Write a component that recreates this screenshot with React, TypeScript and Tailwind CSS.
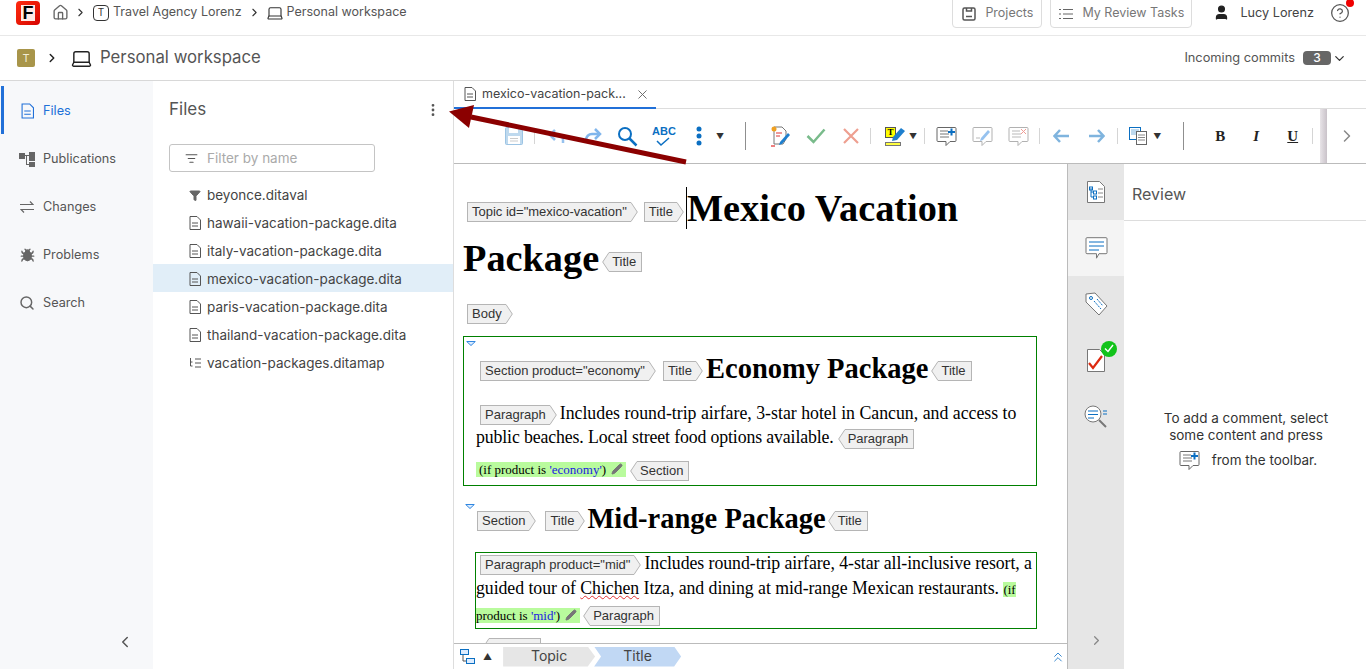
import React from 'react';
import { Home, ChevronRight, Laptop, MoreVertical, X, User, CircleHelp, ChevronDown, ChevronLeft, ChevronsUp, Search, Bug, ListFilter, Filter, Pencil } from 'lucide-react';

const FileIcon: React.FC<{ className?: string; large?: boolean }> = ({ className = '', large }) => (
  <svg className={className} width={large ? 13 : 12} height={large ? 16 : 14} viewBox="0 0 12 14" fill="none" stroke="currentColor" strokeWidth="1">
    <path d="M1 .5h7l3.500 3.500v9.500h-10.500z" />
    <path d="M3 7h6M3 10h6" />
  </svg>
);

const Tag: React.FC<{ label: string; closing?: boolean; className?: string }> = ({ label, closing, className = '' }) => (
  <span className={`inline-flex h-[20px] align-middle font-['Liberation_Sans',sans-serif] text-[13px] font-normal leading-[18px] tracking-normal text-[#333] ${className}`}>
    {closing && (
      <svg width="8" height="20" viewBox="0 0 8 20" className="shrink-0">
        <path d="M8 .5H7L.7 10 7 19.500h1" fill="#f0f0f0" stroke="#b5b5b5" />
      </svg>
    )}
    <span className={`whitespace-nowrap border-y border-[#b5b5b5] bg-[#f0f0f0] ${closing ? 'border-r pr-[5px] pl-[2px]' : 'border-l pl-[4px] pr-[3px]'}`}>{label}</span>
    {!closing && (
      <svg width="8" height="20" viewBox="0 0 8 20" className="shrink-0">
        <path d="M0 .5h1L7.300 10 1 19.500H0" fill="#f0f0f0" stroke="#b5b5b5" />
      </svg>
    )}
  </span>
);

const Fold = () => (
  <svg width="10" height="5" viewBox="0 0 10 5" className="block">
    <path d="M.7.5h8.600L5 4.500z" fill="#dcecff" stroke="#2f86e0" />
  </svg>
);

const Condition: React.FC<{ value: string; className?: string }> = ({ value, className = '' }) => (
  <span className={`bg-[#b9fb9d] text-[13px] tracking-normal ${className}`}>
    (if product is <span className="text-[#2020e0]">'{value}'</span>)
    <Pencil className="ml-[5px] mr-[3px] inline-block align-[-1px]" size={12} color="#777" fill="#777" />
  </span>
);

const Sep = ({ className = '' }: { className?: string }) => <span className={`h-[16px] w-px bg-[#d5d5d5] ${className}`} />;
const BigSep = ({ className = '' }: { className?: string }) => <span className={`h-[28px] w-px bg-[#8f8f8f] ${className}`} />;
const Caret = ({ className = '' }: { className?: string }) => <span className={`text-[8px] leading-none text-[#333] ${className}`}>▼</span>;

const CommentShape: React.FC<{ add?: boolean; edit?: boolean; del?: boolean; faded?: boolean }> = ({ add, edit, del, faded }) => (
  <svg width="21" height="21" viewBox="0 0 21 21" fill="none" className={faded ? 'opacity-50' : ''}>
    <path d="M2 1.500h17a1 1 0 0 1 1 1v12a1 1 0 0 1-1 1h-5l-4 4v-4H2a1 1 0 0 1-1-1v-12a1 1 0 0 1 1-1z" stroke="#666" fill="#fff" />
    <path d={edit ? 'M4 12h4' : 'M4 5h8M4 8h9M4 11h9'} stroke="#777" />
    {add && <path d="M15.500 2.500v7M12 6h7" stroke="#0b6fc2" strokeWidth="2" />}
    {del && <path d="M13 3l5 5M18 3l-5 5" stroke="#e23b2e" />}
    {edit && <path d="M9 12l7-8 2 2-7 8-3 1z" fill="#2f86e0" />}
  </svg>
);

const ToolbarIcons = () => (
  <div className="flex h-[55px] shrink-0 items-center border-b border-[#bbb] pl-[51px]">
    <svg width="18" height="18" viewBox="0 0 18 18" className="opacity-50">
      <path d="M.5 1.500a1 1 0 0 1 1-1h13l3 3v13a1 1 0 0 1-1 1h-15a1 1 0 0 1-1-1z" fill="#7fb4de" stroke="#3c8bcb" />
      <rect x="4" y=".5" width="9" height="5.500" fill="#fff" />
      <rect x="3" y="9" width="12" height="8" fill="#fff" />
      <path d="M5 11.500h8M5 14h8" stroke="#999" />
    </svg>
    <Sep className="ml-[11px]" />
    <svg width="20" height="18" viewBox="0 0 20 18" fill="none" className="ml-[12px] opacity-50">
      <path d="M8 3L3 8l5 5" stroke="#2f86e0" strokeWidth="2.500" />
      <path d="M3 8h8a5 5 0 0 1 5 5v3" stroke="#2f86e0" strokeWidth="2.500" />
    </svg>
    <svg width="20" height="18" viewBox="0 0 20 18" fill="none" className="ml-[16px] opacity-60">
      <path d="M12 2l5 5-5 5" stroke="#2f86e0" strokeWidth="2.500" />
      <path d="M17 7H9a6 6 0 0 0-6 6v3" stroke="#2f86e0" strokeWidth="2.500" />
    </svg>
    <svg width="21" height="21" viewBox="0 0 21 21" fill="none" className="ml-[14px]">
      <circle cx="8" cy="8" r="6" stroke="#0b6fc2" strokeWidth="2" />
      <path d="M12.500 12.500l7 7" stroke="#0b6fc2" strokeWidth="2.500" />
    </svg>
    <span className="relative ml-[14px] block h-[22px] w-[23px]">
      <span className="block text-center font-['Liberation_Sans',sans-serif] text-[11px] font-bold leading-[12px] text-[#0b6fc2]">ABC</span>
      <svg width="14" height="10" viewBox="0 0 14 10" fill="none" className="absolute left-[4px] top-[12px]">
        <path d="M1 4l4 4 8-7" stroke="#0b6fc2" strokeWidth="1.500" />
      </svg>
    </span>
    <svg width="6" height="20" viewBox="0 0 6 20" className="ml-[21px]" fill="#0b6fc2">
      <circle cx="3" cy="3" r="2.500" />
      <circle cx="3" cy="10" r="2.500" />
      <circle cx="3" cy="17" r="2.500" />
    </svg>
    <Caret className="ml-[14px]" />
    <BigSep className="ml-[21px]" />
    <svg width="21" height="22" viewBox="0 0 21 22" fill="none" className="ml-[24px]">
      <path d="M4 2h8l4 4v8l-3 5H4z" fill="#fff" stroke="#777" />
      <path d="M6 8h6M6 11h4" stroke="#d33" />
      <path d="M10 17l8-9 2 2-8 9-3 1z" fill="#1e7fce" />
      <circle cx="4" cy="4" r="2.500" fill="#f0a020" />
      <path d="M1 21h4" stroke="#d00" />
    </svg>
    <svg width="20" height="16" viewBox="0 0 20 16" fill="none" className="ml-[15px]">
      <path d="M1.500 8l6 6L18.500 1.500" stroke="#79bb8b" strokeWidth="2.500" />
    </svg>
    <svg width="16" height="16" viewBox="0 0 16 16" fill="none" className="ml-[17px]">
      <path d="M1 1l14 14M15 1L1 15" stroke="#ee9f90" strokeWidth="2.200" />
    </svg>
    <Sep className="ml-[11px]" />
    <span className="relative ml-[14px] block h-[19px] w-[21px]">
      <span className="absolute left-0 top-0 block h-[11px] w-[11px] border border-[#555] bg-[#ffff00] text-center font-['Liberation_Serif',serif] text-[9px] font-bold leading-[9px] text-black">T</span>
      <span className="absolute bottom-0 left-0 h-[4px] w-[16px] border border-[#777] bg-[#ffff40]" />
      <svg width="15" height="15" viewBox="0 0 15 15" className="absolute left-[6px] top-0">
        <path d="M2 10l8-9 4 3-8 9-5 1z" fill="#1e7fce" />
      </svg>
    </span>
    <Caret className="ml-[3px]" />
    <Sep className="ml-[7px]" />
    <span className="ml-[11px] block"><CommentShape add /></span>
    <span className="ml-[15px] block"><CommentShape edit faded /></span>
    <span className="ml-[15px] block"><CommentShape del faded /></span>
    <Sep className="ml-[10px]" />
    <svg width="16" height="14" viewBox="0 0 16 14" fill="none" className="ml-[13px]">
      <path d="M7 1L1.500 7 7 13M2 7h14" stroke="#7fb4de" strokeWidth="2.500" />
    </svg>
    <svg width="16" height="14" viewBox="0 0 16 14" fill="none" className="ml-[20px]">
      <path d="M9 1l5.500 6L9 13M14 7H0" stroke="#7fb4de" strokeWidth="2.500" />
    </svg>
    <Sep className="ml-[12px]" />
    <svg width="18" height="18" viewBox="0 0 18 18" fill="none" className="ml-[11px]">
      <rect x=".5" y=".5" width="11" height="12" fill="#fff" stroke="#0b6fc2" />
      <path d="M2 3h8M2 5h8M2 7h8" stroke="#7fb4de" />
      <rect x="7.500" y="4.500" width="10" height="13" fill="#fff" stroke="#666" />
      <path d="M9 8h7M9 10.500h7M9 13h7" stroke="#888" />
    </svg>
    <Caret className="ml-[6px]" />
    <BigSep className="ml-[22px]" />
    <b className="ml-[31px] w-[10px] text-center font-['Liberation_Serif',serif] text-[15px] text-[#222]">B</b>
    <i className="ml-[26px] w-[10px] text-center font-['Liberation_Serif',serif] text-[15px] font-bold text-[#222]">I</i>
    <span className="ml-[26px] w-[10px] text-center font-['Liberation_Serif',serif] text-[15px] font-bold text-[#222] underline">U</span>
    <Sep className="ml-[15px]" />
    <span className="ml-[7px] h-full w-[7px] bg-gradient-to-r from-[#e8e4e8] to-[#c9c2c9]" />
    <ChevronRight className="ml-[10px]" size={20} color="#888" strokeWidth={1.800} />
  </div>
);

const navItems = [
  { label: 'Files', active: true, icon: <FileIcon large className="text-[#2170d8]" /> },
  {
    label: 'Publications',
    icon: (
      <svg width="16" height="15" viewBox="0 0 16 15" fill="#666" className="shrink-0">
        <rect x="0" y="1" width="6" height="6" />
        <rect x="10" y="0" width="6" height="5" />
        <rect x="10" y="5" width="6" height="4" />
        <rect x="10" y="10" width="6" height="5" />
        <path d="M6 3h4v1H8v8h2v1H7V4H6z" />
      </svg>
    ),
  },
  {
    label: 'Changes',
    icon: (
      <svg width="14" height="12" viewBox="0 0 14 12" fill="none" stroke="#666" strokeWidth="1.200" className="shrink-0">
        <path d="M0 3.500h13L10 .5M14 8.500H1l3 3" />
      </svg>
    ),
  },
  { label: 'Problems', icon: <Bug className="shrink-0" size={15} color="#666" fill="#666" /> },
  { label: 'Search', icon: <Search className="shrink-0" size={16} color="#666" strokeWidth={2.200} /> },
];

const files = [
  { name: 'beyonce.ditaval', kind: 'filter' },
  { name: 'hawaii-vacation-package.dita', kind: 'file' },
  { name: 'italy-vacation-package.dita', kind: 'file' },
  { name: 'mexico-vacation-package.dita', kind: 'file', selected: true },
  { name: 'paris-vacation-package.dita', kind: 'file' },
  { name: 'thailand-vacation-package.dita', kind: 'file' },
  { name: 'vacation-packages.ditamap', kind: 'map' },
];

const App: React.FC = () => {
  return (
    <div className="relative flex h-[669px] w-[1366px] flex-col overflow-hidden bg-white font-['Inter',sans-serif] text-[13px] text-[#555]">
      <header className="flex h-[36px] shrink-0 items-center border-b border-[#e8e8e8] pb-[10px] text-[12.500px]">
        <div className="ml-[16px] flex h-[24px] w-[24px] items-center justify-center rounded-[4px] bg-gradient-to-br from-[#ff2a10] to-[#d60000]">
          <span className="flex h-[16px] w-[14px] items-center justify-center bg-[#ffe9e4] font-['Liberation_Sans',sans-serif] text-[18px] font-bold leading-none text-black">F</span>
        </div>
        <Home className="ml-[12px]" size={17} color="#666" strokeWidth={1.900} />
        <ChevronRight className="ml-[5px]" size={13} color="#333" strokeWidth={2} />
        <span className="ml-[6px] flex h-[16px] w-[16px] items-center justify-center rounded-[4px] border border-[#333] text-[10px] text-[#333]">T</span>
        <span className="ml-[4px]">Travel Agency Lorenz</span>
        <ChevronRight className="ml-[6px]" size={13} color="#333" strokeWidth={2} />
        <Laptop className="ml-[5px]" size={18} color="#333" strokeWidth={1.500} />
        <span className="ml-[3px]">Personal workspace</span>

        <div className="ml-auto flex items-center">
          <button className="flex h-[31px] w-[90px] items-center rounded-b-[4px] border border-[#ddd] pl-[9px] pt-[2px] text-[#777]">
            <svg width="14" height="14" viewBox="0 0 14 14" fill="none" stroke="#555" strokeWidth="1.500">
              <rect x="1" y="1" width="12" height="12" rx="1.500" />
              <path d="M4.500 1v3h5V1M4 9.500h6" />
            </svg>
            <span className="ml-[9px]">Projects</span>
          </button>
          <button className="ml-[8px] flex h-[31px] w-[142px] items-center rounded-b-[4px] border border-[#ddd] pl-[8px] pt-[2px] text-[#777]">
            <svg width="14" height="12" viewBox="0 0 14 12" stroke="#666" strokeWidth="1.200">
              <path d="M0 1.500h2M4 1.500h10M0 6h2M4 6h10M0 10.500h2M4 10.500h10" />
            </svg>
            <span className="ml-[9px]">My Review Tasks</span>
          </button>
          <User className="ml-[21px]" size={17} color="#222" fill="#222" />
          <span className="ml-[10px] text-[12.700px] text-[#444]">Lucy Lorenz</span>
          <span className="relative ml-[16px] mr-[16px] block">
            <CircleHelp size={20} color="#555" strokeWidth={1.500} />
            <span className="absolute right-[-4px] top-[-4px] h-[8px] w-[8px] rounded-full bg-[#f00000]" />
          </span>
        </div>
      </header>

      <div className="flex h-[45px] shrink-0 items-center border-b border-[#d8d8d8]">
        <span className="ml-[17px] flex h-[18px] w-[18px] items-center justify-center rounded-[2px] bg-[#a8954a] text-[11px] text-[#f2ecd4]">T</span>
        <ChevronRight className="ml-[10px]" size={14} color="#222" strokeWidth={2.500} />
        <Laptop className="ml-[11px]" size={23} color="#222" strokeWidth={1.500} />
        <span className="ml-[7px] text-[16.750px] text-[#555]">Personal workspace</span>
        <div className="ml-auto flex items-center pr-[19px]">
          <span className="text-[12.800px] text-[#555]">Incoming commits</span>
          <span className="ml-[8px] flex h-[14px] w-[28px] items-center justify-center rounded-[4px] bg-[#666] text-[12px] font-medium text-white">3</span>
          <ChevronDown className="ml-[1px]" size={15} color="#333" strokeWidth={2} />
        </div>
      </div>

      <div className="flex min-h-0 flex-1">
        <nav className="flex w-[153px] shrink-0 flex-col bg-[#f7f8fa] pt-[5px] text-[12.700px]">
          {navItems.map((item) => (
            <div key={item.label} className={`ml-[1px] flex h-[48px] items-center border-l-[3px] pt-[2px] ${item.active ? 'border-[#2170d8] text-[#2170d8]' : 'border-transparent text-[#555]'}`}>
              <span className="ml-[16px] mr-[9px] flex w-[14px] justify-center">{item.icon}</span>
              <span>{item.label}</span>
            </div>
          ))}
          <div className="mt-auto flex justify-end pb-[18px] pr-[19px]">
            <ChevronLeft size={18} color="#555" strokeWidth={2} />
          </div>
        </nav>

        <aside className="flex w-[301px] shrink-0 flex-col border-r border-[#ddd] text-[13.500px]">
          <div className="flex h-[58px] items-center justify-between pl-[16px] pr-[12px]">
            <span className="text-[17px] text-[#555]">Files</span>
            <MoreVertical size={16} color="#555" strokeWidth={2.200} />
          </div>
          <div className="ml-[16px] mt-[5px] flex h-[28px] w-[206px] items-center rounded-[3px] border border-[#c4c4c4] pl-[15px]">
            <ListFilter size={13} color="#555" />
            <span className="ml-[9px] text-[#aaa]">Filter by name</span>
          </div>
          <ul className="mt-[8px]">
            {files.map((f) => (
              <li key={f.name} className={`flex h-[28px] items-center pl-[36px] pt-[2px] ${f.selected ? 'bg-[#e1eef8]' : ''}`}>
                <span className="flex w-[12px] justify-center">
                  {f.kind === 'filter' && <Filter size={13} color="#666" fill="#666" />}
                  {f.kind === 'file' && <FileIcon className="text-[#555]" />}
                  {f.kind === 'map' && (
                    <svg width="12" height="12" viewBox="0 0 12 12" fill="none" stroke="#555">
                      <path d="M1.500 1v8h2M1.500 5h2M6 2h6M6 6h6M6 10h6" />
                    </svg>
                  )}
                </span>
                <span className="ml-[6px] text-[#444]">{f.name}</span>
              </li>
            ))}
          </ul>
        </aside>

        <main className="flex min-w-0 flex-1 flex-col">
          <div className="flex h-[28px] shrink-0 border-b border-[#ddd]">
            <div className="flex h-[28px] w-[202px] items-center border-b-2 border-[#2170d8] pl-[10px]">
              <FileIcon className="shrink-0 text-[#555]" />
              <span className="ml-[6px] whitespace-nowrap text-[12.500px] text-[#444]">mexico-vacation-pack...</span>
              <X className="ml-[9px] shrink-0" size={15} color="#666" strokeWidth={1.500} />
            </div>
          </div>
          <ToolbarIcons />

          <div className="flex min-h-0 flex-1">
            <div className="flex min-w-0 flex-1 flex-col border-r border-[#bbb]">
              <div className="min-h-0 flex-1 overflow-hidden pl-[9px] pr-[30px] font-['Liberation_Serif',serif] text-black">
                <h1 className="mt-[19px] text-[38.300px] font-bold leading-[50px]">
                  <Tag label={'Topic id="mexico-vacation"'} className="ml-[4px] mr-[6px]" />
                  <Tag label="Title" className="mr-[2px]" />
                  <span className="border-l border-black">Mexico Vacation Package</span>
                  <Tag label="Title" closing className="ml-[3px]" />
                </h1>
                <div className="mt-[20px]"><Tag label="Body" className="ml-[4px]" /></div>

                <section className="mt-[12px] h-[150px] w-[574px] border border-[#008000] px-[12px]">
                  <div className="ml-[-10px] mt-[4px]"><Fold /></div>
                  <h2 className="mt-[3px] whitespace-nowrap text-[28.500px] font-bold leading-[40px]">
                    <Tag label={'Section product="economy"'} className="ml-[4px] mr-[7px]" />
                    <Tag label="Title" className="mr-[3px]" />
                    Economy Package
                    <Tag label="Title" closing className="ml-[3px]" />
                  </h2>
                  <p className="mt-[12px] text-[17.800px] leading-[24px]">
                    <Tag label="Paragraph" className="ml-[4px] mr-[3px]" />
                    Includes round-trip airfare, 3-star hotel in Cancun, and access to{' '}
                    <span className="tracking-[-0.13px]">public beaches. Local street food options available.</span>
                    <Tag label="Paragraph" closing className="ml-[4px]" />
                  </p>
                  <div className="mt-[11px]">
                    <Condition value="economy" className="pl-[3px]" />
                    <Tag label="Section" closing className="ml-[4px]" />
                  </div>
                </section>

                <div className="ml-[2px] mt-[18px]"><Fold /></div>
                <h2 className="mt-[-10px] whitespace-nowrap text-[28.500px] font-bold leading-[40px]">
                  <Tag label="Section" className="ml-[14px] mr-[9px]" />
                  <Tag label="Title" className="mr-[2px]" />
                  Mid-range Package
                  <Tag label="Title" closing className="ml-[2px]" />
                </h2>
                <div className="ml-[12px] mt-[13px] h-[77px] w-[562px] overflow-hidden border border-[#008000] text-[17.800px] leading-[25px]">
                  <div className="mt-[-2px] tracking-[-0.06px]">
                    <Tag label={'Paragraph product="mid"'} className="ml-[4px] mr-[3px]" />
                    Includes round-trip airfare, 4-star all-inclusive resort, a guided tour of{' '}
                    <span className="underline decoration-wavy decoration-[#e03030] decoration-1">Chichen</span> Itza, and dining at mid-range Mexican restaurants.{' '}
                    <Condition value="mid" />
                    <Tag label="Paragraph" closing className="ml-[3px]" />
                  </div>
                </div>
                <div className="mt-[8px] h-[20px] leading-[20px]"><Tag label="Section" closing className="ml-[19px]" /></div>
              </div>

              <div className="flex h-[26px] shrink-0 items-center border-t border-[#bbb]">
                <svg width="15" height="15" viewBox="0 0 15 15" fill="none" stroke="#0b6fc2" className="ml-[6px]">
                  <rect x=".5" y=".5" width="8" height="5" fill="#dcecff" />
                  <rect x="6.500" y="9.500" width="8" height="5" fill="#dcecff" />
                  <path d="M3 6v6h3" stroke="#555" />
                </svg>
                <span className="ml-[8px] text-[9px] text-[#333]">▲</span>
                <div className="ml-[11px] flex h-[20px] w-[92px] items-center justify-center bg-[#e6e6e6] pb-[2px] text-[14px] text-[#444] [clip-path:polygon(0_0,92%_0,100%_50%,92%_100%,0_100%)]">Topic</div>
                <div className="ml-[-1px] flex h-[20px] w-[87px] items-center justify-center bg-[#c1d8f4] pb-[2px] text-[14px] text-[#444] [clip-path:polygon(0_0,92%_0,100%_50%,92%_100%,0_100%,8%_50%)]">Title</div>
                <ChevronsUp className="ml-auto mr-[1px]" size={16} color="#3b8ad0" strokeWidth={1.500} />
              </div>
            </div>

            <div className="flex w-[56px] shrink-0 flex-col bg-[#e6e6e6]">
              <div className="flex h-[56px] items-center justify-center">
                <svg width="18" height="22" viewBox="0 0 18 22" fill="none">
                  <path d="M.5.500h12l5 5v16H.5z" fill="#fff" stroke="#777" />
                  <path d="M4 7v9h2M4 11h2" stroke="#0b6fc2" />
                  <rect x="2.500" y="6" width="3" height="3" stroke="#0b6fc2" />
                  <rect x="6.500" y="10" width="3" height="3" stroke="#0b6fc2" />
                  <rect x="6.500" y="15" width="3" height="3" stroke="#0b6fc2" />
                  <path d="M11 8h5M11 12h5M11 16h5" stroke="#888" />
                </svg>
              </div>
              <div className="flex h-[56px] items-center justify-center bg-[#f4f4f4]">
                <svg width="23" height="23" viewBox="0 0 23 23" fill="none">
                  <path d="M2 .700h19a1 1 0 0 1 1 1v14a1 1 0 0 1-1 1h-7l-2.500 4.500v-4.500H2a1 1 0 0 1-1-1v-14a1 1 0 0 1 1-1z" stroke="#777" fill="#fff" />
                  <path d="M4 5h15M4 9h15M4 13h10" stroke="#0b6fc2" />
                </svg>
              </div>
              <div className="flex h-[56px] items-center justify-center">
                <svg width="23" height="24" viewBox="0 0 23 24" fill="none">
                  <path d="M1 2l9-1 12 13-8 9L1 10z" fill="#fff" stroke="#777" />
                  <circle cx="6" cy="6" r="1.500" stroke="#0b6fc2" />
                  <path d="M9 9l7 8M12 7l6 7" stroke="#0b6fc2" strokeDasharray="2 1" />
                </svg>
              </div>
              <div className="flex h-[56px] items-center justify-center">
                <span className="relative block h-[23px] w-[18px]">
                  <svg width="18" height="23" viewBox="0 0 18 23" fill="none">
                    <path d="M.5.500h12l5 5v17H.5z" fill="#fff" stroke="#777" />
                    <path d="M2 14l4 5 9-12" stroke="#dd2a10" strokeWidth="2.200" />
                  </svg>
                  <span className="absolute left-[14px] top-[-8px] flex h-[16px] w-[16px] items-center justify-center rounded-full bg-[#12c31a]">
                    <svg width="10" height="9" viewBox="0 0 10 9" fill="none">
                      <path d="M1 4.500l3 3 5-6.500" stroke="#fff" strokeWidth="1.400" />
                    </svg>
                  </span>
                </span>
              </div>
              <div className="flex h-[56px] items-center justify-center">
                <svg width="24" height="23" viewBox="0 0 24 23" fill="none">
                  <circle cx="9" cy="9" r="8" fill="#fff" stroke="#777" />
                  <path d="M4 6h10M4 9.500h10M4 13h6" stroke="#0b6fc2" />
                  <path d="M15 15l7 7" stroke="#777" strokeWidth="2" />
                  <path d="M19 6h4M19 9h4" stroke="#0b6fc2" />
                </svg>
              </div>
              <div className="mt-auto flex justify-center pb-[21px]">
                <ChevronRight size={15} color="#888" strokeWidth={2} />
              </div>
            </div>

            <div className="flex w-[242px] shrink-0 flex-col">
              <div className="flex h-[57px] shrink-0 items-center border-b border-[#ddd] pl-[8px] pt-[4px] text-[16px] text-[#555]">Review</div>
              <div className="mt-[189px] flex flex-col items-center pl-[2px] text-[13.500px] leading-[17px] text-[#333]">
                <span>To add a comment, select</span>
                <span>some content and press</span>
                <span className="mt-[6px] flex items-center pl-[4px]">
                  <CommentShape add />
                  <span className="ml-[12px]">from the toolbar.</span>
                </span>
              </div>
            </div>
          </div>
        </main>
      </div>

      <svg width="250" height="64" viewBox="0 0 250 64" className="pointer-events-none absolute left-[447px] top-[103px]">
        <path d="M239 59L24 14" stroke="#8b0000" strokeWidth="5" />
        <path d="M2 8.500L27 2l-5 23z" fill="#8b0000" />
      </svg>
    </div>
  );
};

export default App;
